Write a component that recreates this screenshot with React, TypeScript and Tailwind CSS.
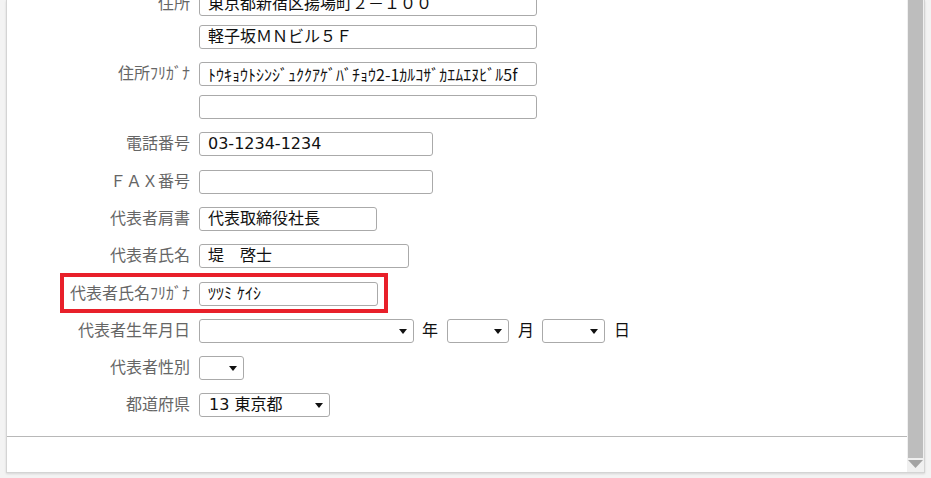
import React from "react";

const FONT = { fontFamily: '"DejaVu Sans", "Noto Sans CJK JP", sans-serif' };

function Caret() {
  return (
    <svg width="8" height="5" viewBox="0 0 8 5" className="shrink-0">
      <polygon points="0,0 8,0 4,5" fill="#111" />
    </svg>
  );
}

function Box({ w, text, className = "" }: { w: string; text?: string; className?: string }) {
  return (
    <div
      className={`${w} h-[24px] border border-[#aaaaaa] rounded-[3px] bg-white flex items-center pl-[8px] text-[16px] leading-none text-[#111] whitespace-nowrap overflow-hidden ${className}`}
    >
      {text}
    </div>
  );
}

function Select({ w, text }: { w: string; text?: string }) {
  return (
    <div
      className={`${w} h-[24px] border border-[#aaaaaa] rounded-[3px] bg-white flex items-center justify-between pl-[9px] pr-[6px] text-[16px] leading-none text-[#111] whitespace-nowrap`}
    >
      <span>{text}</span>
      <Caret />
    </div>
  );
}

function Row({ label, children, className = "" }: { label?: string; children: React.ReactNode; className?: string }) {
  return (
    <div className={`flex items-center ${className}`}>
      <div className="w-[183px] text-right text-[16px] leading-none text-[#666] whitespace-nowrap">{label}</div>
      <div className="ml-[9px] flex items-center">{children}</div>
    </div>
  );
}

export default function App() {
  return (
    <div className="w-[931px] h-[478px] bg-[#f3f3f3] overflow-hidden pl-[6px] pr-[6px]" style={FONT}>
      <div className="h-[473px] flex bg-white border-l border-r border-b border-[#d4d4d4] shadow-[0_1px_2px_rgba(0,0,0,0.12)]">
        <div className="w-[900px] overflow-hidden">
          <div className="mt-[-8px] flex flex-col">
            <Row label="住所">
              <Box w="w-[338px]" text="東京都新宿区揚場町２－１００" />
            </Row>
            <Row className="mt-[9px]">
              <Box w="w-[338px]" text="軽子坂ＭＮビル５Ｆ" />
            </Row>
            <Row label="住所ﾌﾘｶﾞﾅ" className="mt-[13px]">
              <Box
                w="w-[338px]"
                className="font-[family-name:Noto_Sans_CJK_JP]"
                text="ﾄｳｷｮｳﾄｼﾝｼﾞｭｸｸｱｹﾞﾊﾞﾁｮｳ2-1ｶﾙｺｻﾞｶｴﾑｴﾇﾋﾞﾙ5f"
              />
            </Row>
            <Row className="mt-[9px]">
              <Box w="w-[338px]" />
            </Row>
            <Row label="電話番号" className="mt-[13px]">
              <Box w="w-[234px]" text="03-1234-1234" />
            </Row>
            <Row label="ＦＡＸ番号" className="mt-[14px]">
              <Box w="w-[234px]" />
            </Row>
            <Row label="代表者肩書" className="mt-[13px]">
              <Box w="w-[178px]" text="代表取締役社長" />
            </Row>
            <Row label="代表者氏名" className="mt-[13px]">
              <Box w="w-[210px]" text="堤　啓士" />
            </Row>
            <div className="relative mt-[14px]">
              <Row label="代表者氏名ﾌﾘｶﾞﾅ">
                <Box w="w-[179px]" text="ﾂﾂﾐ ｹｲｼ" />
              </Row>
              <div className="absolute left-[53px] top-[-9px] w-[328px] h-[40px] border-[4px] border-[#e8202a] pointer-events-none" />
            </div>
            <Row label="代表者生年月日" className="mt-[13px]">
              <Select w="w-[215px]" />
              <span className="ml-[8px] text-[16px] leading-none text-[#111]">年</span>
              <div className="ml-[9px]">
                <Select w="w-[62px]" />
              </div>
              <span className="ml-[9px] text-[16px] leading-none text-[#111]">月</span>
              <div className="ml-[8px]">
                <Select w="w-[63px]" />
              </div>
              <span className="ml-[9px] text-[16px] leading-none text-[#111]">日</span>
            </Row>
            <Row label="代表者性別" className="mt-[13px]">
              <Select w="w-[45px]" />
            </Row>
            <Row label="都道府県" className="mt-[13px]">
              <Select w="w-[131px]" text="13 東京都" />
            </Row>
            <div className="mt-[19px] h-px bg-[#b8b8b8]" />
          </div>
        </div>
        <div className="w-[17px] bg-[#f0f0f0] flex flex-col px-[1px]">
          <div className="h-[458px] bg-[#bdbdbd]" />
          <div className="mt-[2px] flex justify-center">
            <svg width="15" height="8" viewBox="0 0 15 8">
              <polygon points="0,0 15,0 7.5,8" fill="#a3a3a3" />
            </svg>
          </div>
        </div>
      </div>
    </div>
  );
}
